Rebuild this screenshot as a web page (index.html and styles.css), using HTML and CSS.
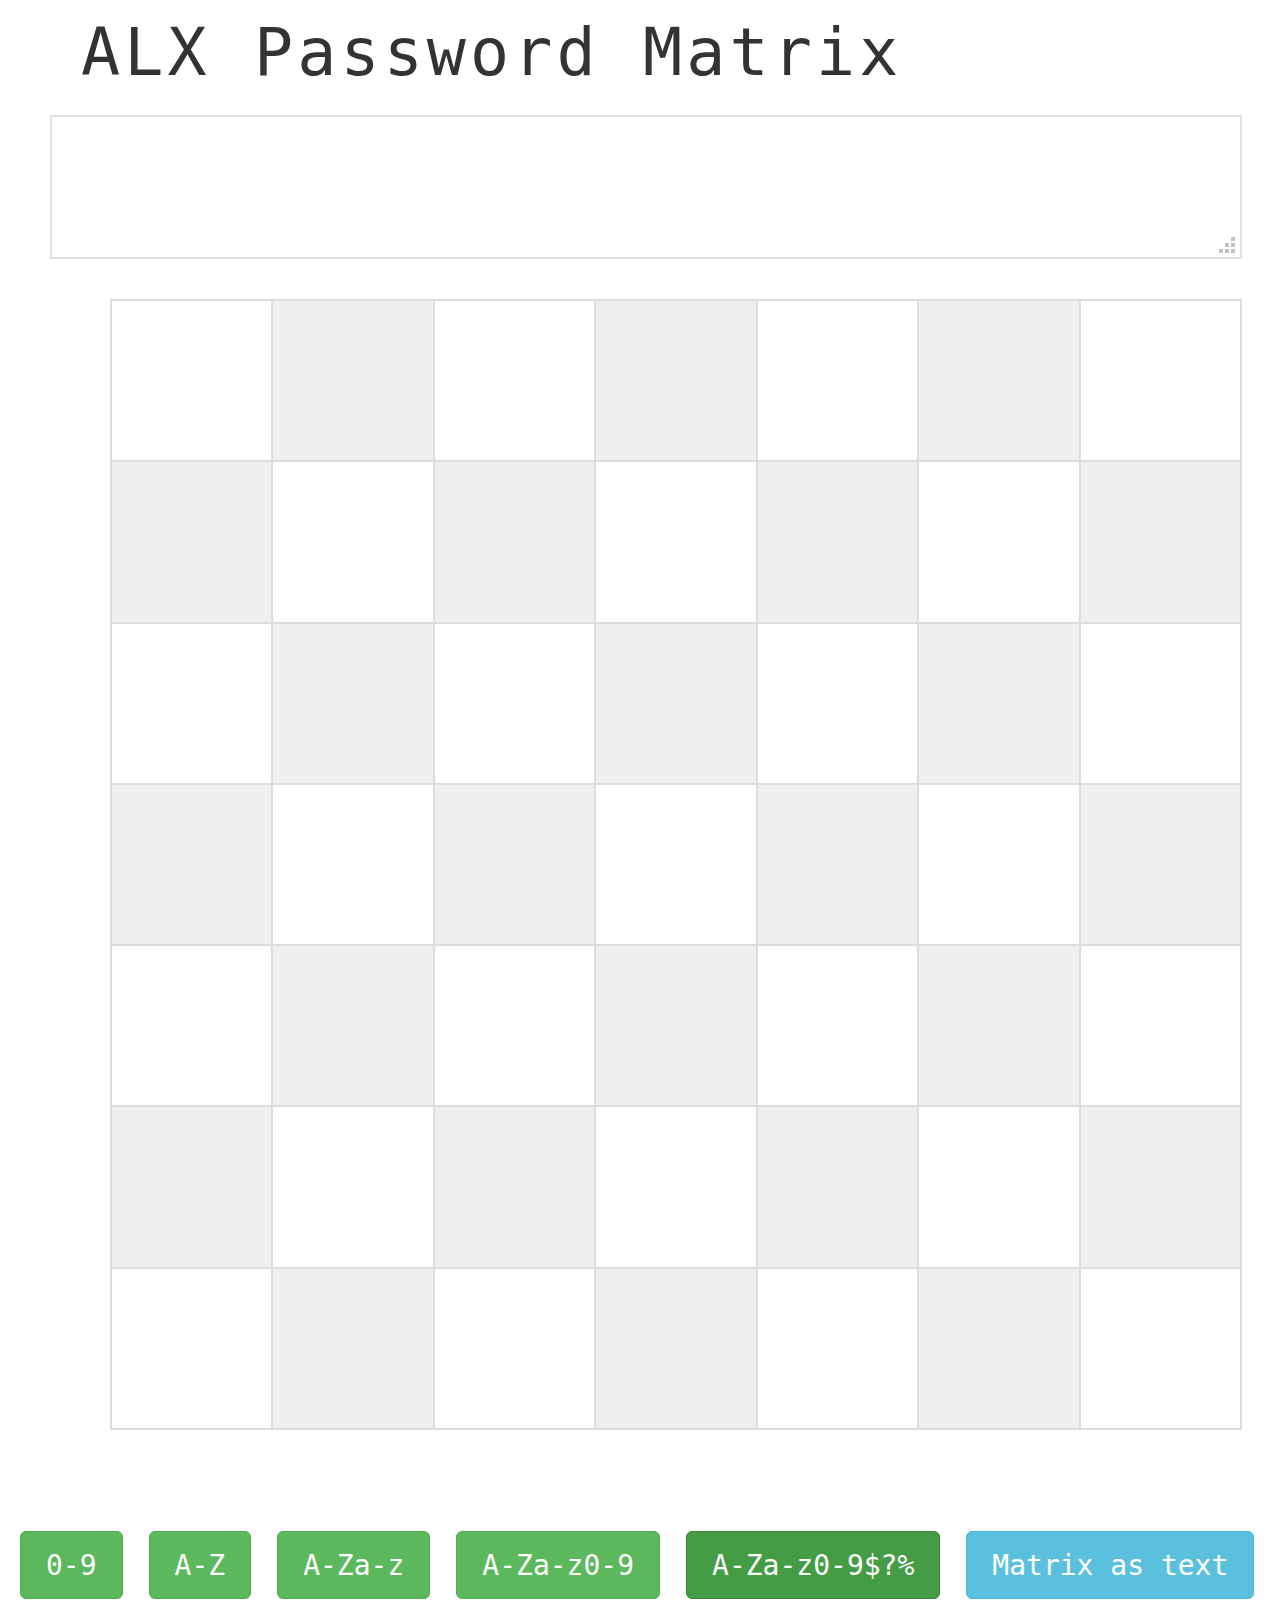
FILE: index.html
```html
<!DOCTYPE html>
<html>
<head>
<meta charset="utf-8">
<title>ALX Password Matrix</title>
<link rel="stylesheet" href="styles.css">
</head>
<body>
<h1 class="title">ALX Password Matrix</h1>
<div class="input-wrap">
  <textarea class="input"></textarea>
  <svg class="grip" width="16" height="16" viewBox="0 0 16 16" aria-hidden="true">
    <rect x="12" y="0" width="4" height="4"/>
    <rect x="6" y="6" width="4" height="4"/>
    <rect x="12" y="6" width="4" height="4"/>
    <rect x="0" y="12" width="4" height="4"/>
    <rect x="6" y="12" width="4" height="4"/>
    <rect x="12" y="12" width="4" height="4"/>
  </svg>
</div>
<div class="matrix">
  <div class="cell"></div><div class="cell alt"></div><div class="cell"></div><div class="cell alt"></div><div class="cell"></div><div class="cell alt"></div><div class="cell"></div>
  <div class="cell alt"></div><div class="cell"></div><div class="cell alt"></div><div class="cell"></div><div class="cell alt"></div><div class="cell"></div><div class="cell alt"></div>
  <div class="cell"></div><div class="cell alt"></div><div class="cell"></div><div class="cell alt"></div><div class="cell"></div><div class="cell alt"></div><div class="cell"></div>
  <div class="cell alt"></div><div class="cell"></div><div class="cell alt"></div><div class="cell"></div><div class="cell alt"></div><div class="cell"></div><div class="cell alt"></div>
  <div class="cell"></div><div class="cell alt"></div><div class="cell"></div><div class="cell alt"></div><div class="cell"></div><div class="cell alt"></div><div class="cell"></div>
  <div class="cell alt"></div><div class="cell"></div><div class="cell alt"></div><div class="cell"></div><div class="cell alt"></div><div class="cell"></div><div class="cell alt"></div>
  <div class="cell"></div><div class="cell alt"></div><div class="cell"></div><div class="cell alt"></div><div class="cell"></div><div class="cell alt"></div><div class="cell"></div>
</div>
<div class="buttons">
  <button class="btn btn-success">0-9</button>
  <button class="btn btn-success">A-Z</button>
  <button class="btn btn-success">A-Za-z</button>
  <button class="btn btn-success">A-Za-z0-9</button>
  <button class="btn btn-success active">A-Za-z0-9$?%</button>
  <button class="btn btn-info">Matrix as text</button>
</div>
</body>
</html>
```
FILE: styles.css
```css
html, body {
  margin: 0;
  padding: 0;
  background: #fff;
}

.title {
  font-family: "DejaVu Sans Mono", monospace;
  font-size: 65px;
  letter-spacing: 4.1px;
  font-weight: normal;
  line-height: 72px;
  height: 72px;
  color: #333;
  margin: 17px 0 0 81px;
  white-space: nowrap;
}

.input-wrap {
  position: relative;
  margin: 26px 0 0 50px;
  width: 1192px;
  height: 144px;
}

.input {
  display: block;
  box-sizing: border-box;
  width: 1192px;
  height: 144px;
  margin: 0;
  border: 2px solid #e2e2e2;
  background: #fff;
  padding: 6px;
  outline: none;
  resize: none;
}

.grip {
  position: absolute;
  right: 7px;
  bottom: 6px;
  fill: #c2c2c2;
}

.matrix {
  box-sizing: border-box;
  margin: 40px 0 0 110px;
  width: 1132px;
  height: 1131px;
  display: grid;
  grid-template-columns: repeat(7, 1fr);
  grid-template-rows: repeat(7, 1fr);
  border-top: 2px solid #ddd;
  border-left: 2px solid #ddd;
}

.cell {
  background: #fff;
  border-right: 2px solid #ddd;
  border-bottom: 2px solid #ddd;
}

.cell.alt {
  background: #efefef;
}

.buttons {
  display: flex;
  gap: 26px;
  margin: 101px 0 0 20px;
}

.btn {
  box-sizing: border-box;
  height: 68px;
  padding: 0 25px;
  border: 1px solid transparent;
  border-radius: 6px;
  font-family: "DejaVu Sans Mono", monospace;
  font-size: 28px;
  color: #fff;
  cursor: pointer;
}

.btn-success {
  background: #5cb85c;
  border-color: #4cae4c;
}

.btn-success.active {
  background: #449d44;
  border-color: #398439;
}

.btn-info {
  background: #5bc0de;
  border-color: #46b8da;
}
```
